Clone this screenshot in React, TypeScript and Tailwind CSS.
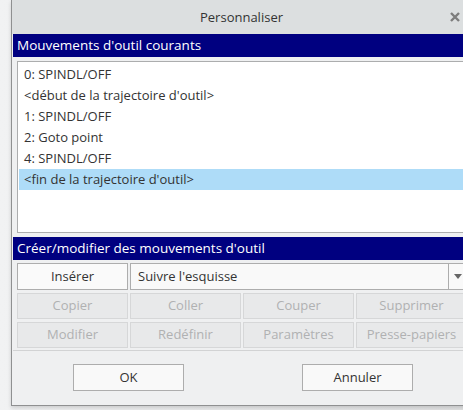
import React, { useState } from 'react';

const moves = [
  '0: SPINDL/OFF',
  "<début de la trajectoire d'outil>",
  '1: SPINDL/OFF',
  '2: Goto point',
  '4: SPINDL/OFF',
  "<fin de la trajectoire d'outil>",
];

const disabledRows = [
  ['Copier', 'Coller', 'Couper', 'Supprimer'],
  ['Modifier', 'Redéfinir', 'Paramètres', 'Presse-papiers'],
];

const App: React.FC = () => {
  const [selected, setSelected] = useState(5);

  return (
    <div
      className="w-[463px] h-[410px] overflow-hidden flex bg-gradient-to-r from-[#f1f2f3] to-[#e2e3e4] text-[#333]"
      style={{ fontFamily: '"Open Sans", "Noto Sans", sans-serif' }}
    >
      <div className="ml-[11px] w-[460px] shrink-0 h-[406px] flex flex-col bg-[#eff0f1] border-l border-b border-[#8f9091] shadow-[0_2px_4px_rgba(0,0,0,0.15)]">
        {/* title bar */}
        <div className="h-[34px] bg-[#dcdfe0] flex items-center relative">
          <div className="flex-1 text-center text-[13px] text-[#333] pt-[1px]">Personnaliser</div>
          <svg className="absolute right-[11px] top-[12px]" width="10" height="10" viewBox="0 0 10 10">
            <path d="M1 1L9 9M9 1L1 9" stroke="#7d7d7d" strokeWidth="2.4" />
          </svg>
        </div>

        <div className="ml-[1px] h-[23px] bg-[#000080] text-white text-[13.5px] flex items-center pl-[4px]">
          Mouvements d'outil courants
        </div>

        {/* list */}
        <div className="mt-[4px] ml-[5px] h-[172px] bg-white border border-[#acadae] pt-[2px] px-[1px]">
          {moves.map((m, i) => (
            <div
              key={i}
              onClick={() => setSelected(i)}
              className={`h-[21px] flex items-center pl-[5px] text-[13px] ${
                selected === i ? 'bg-[#aedcf8]' : ''
              }`}
            >
              {m}
            </div>
          ))}
        </div>

        <div className="mt-[4px] ml-[1px] h-[23px] bg-[#000080] text-white text-[13.5px] flex items-center pl-[4px]">
          Créer/modifier des mouvements d'outil
        </div>

        {/* actions */}
        <div className="ml-[5px] mt-[3px] flex flex-col gap-[3px] text-[13px]">
          <div className="flex gap-[2px] h-[27px]">
            <button className="w-[111px] shrink-0 bg-[#fafafa] border border-[#adadad] text-[#333]">Insérer</button>
            <div className="w-[337px] shrink-0 bg-[#f9f9f9] border border-[#adadad] flex items-center">
              <span className="flex-1 pl-[7px]">Suivre l'esquisse</span>
              <span className="w-[18px] h-full border-l border-[#adadad] flex items-center justify-center">
                <svg width="8" height="5" viewBox="0 0 8 5">
                  <path d="M0 0h8L4 5z" fill="#666" />
                </svg>
              </span>
            </div>
          </div>
          {disabledRows.map((row, r) => (
            <div key={r} className="flex gap-[2px] h-[26px]">
              {row.map((b) => (
                <button
                  key={b}
                  disabled
                  className="w-[111px] shrink-0 bg-[#e8e9ea] border border-[#d6d7d8] text-[#b0b1b2]"
                >
                  {b}
                </button>
              ))}
            </div>
          ))}
        </div>

        <div className="mt-[2px] ml-[1px] h-[1px] bg-[#d2d3d4]" />

        <div className="mt-[13px] flex text-[13px]">
          <button className="ml-[61px] w-[111px] h-[27px] bg-[#f9f9f9] border border-[#adadad]">OK</button>
          <button className="ml-[118px] w-[111px] h-[27px] bg-[#f9f9f9] border border-[#adadad]">Annuler</button>
        </div>
      </div>
    </div>
  );
};

export default App;
